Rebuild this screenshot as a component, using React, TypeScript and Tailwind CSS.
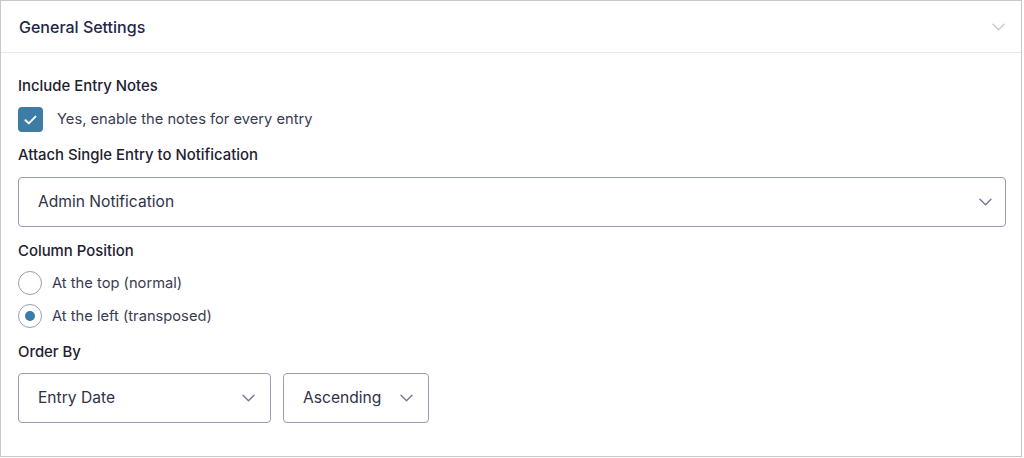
import React from "react";

const Chevron = ({ className = "" }: { className?: string }) => (
  <svg width="13" height="8" viewBox="0 0 13 8" fill="none" className={className}>
    <path d="M1 1.2l5.5 5.5L12 1.2" stroke="currentColor" strokeWidth="1.4" strokeLinecap="round" strokeLinejoin="round" />
  </svg>
);

const Select = ({ label, className = "" }: { label: string; className?: string }) => (
  <div className={`flex items-center justify-between h-[50px] border border-[#9a9cbc] rounded-[4px] pl-[19px] bg-white ${className}`}>
    <span className="text-[15.6px] text-[#2f3247]">{label}</span>
    <Chevron className="text-[#74778f]" />
  </div>
);

export default function App() {
  return (
    <div className="bg-white" style={{ fontFamily: "Inter, 'Noto Sans', sans-serif" }}>
      <div className="w-[1022px] h-[457px] border border-[#c8c8cc] bg-white">
        <div className="h-[52px] border-b border-[#e8e8ec] flex items-center justify-between pl-[18px] pr-[16px]">
          <span className="text-[16px] font-medium text-[#242748]">General Settings</span>
          <Chevron className="text-[#c7c8d4]" />
        </div>
        <div className="pl-[17px] pr-[16px] pt-[23px]">
          <div className="text-[14.9px] font-medium text-[#1f2130] leading-[20px]">Include Entry Notes</div>
          <div className="flex items-center mt-[11px] h-[25px]">
            <div className="w-[25px] h-[25px] rounded-[4px] bg-[#3d7ca5] flex items-center justify-center">
              <svg width="13" height="10" viewBox="0 0 13 10" fill="none">
                <path d="M1.5 5.2l3.3 3.2L11.5 1.6" stroke="white" strokeWidth="2" strokeLinecap="round" strokeLinejoin="round" />
              </svg>
            </div>
            <span className="ml-[14px] text-[14.7px] text-[#3a3c52]">Yes, enable the notes for every entry</span>
          </div>
          <div className="text-[14.9px] font-medium text-[#1f2130] leading-[20px] mt-[13px]">Attach Single Entry to Notification</div>
          <Select label="Admin Notification" className="mt-[12px] w-[988px] pr-[13px]" />
          <div className="text-[14.9px] font-medium text-[#1f2130] leading-[20px] mt-[14px]">Column Position</div>
          <div className="flex items-center mt-[10px] h-[24px]">
            <div className="w-[24px] h-[24px] rounded-full border border-[#9a9cb0] bg-white" />
            <span className="ml-[10px] text-[14.7px] text-[#3a3c52]">At the top (normal)</span>
          </div>
          <div className="flex items-center mt-[9px] h-[24px]">
            <div className="w-[24px] h-[24px] rounded-full border border-[#9a9cb0] bg-white flex items-center justify-center">
              <div className="w-[10px] h-[10px] rounded-full bg-[#3d7ca5]" />
            </div>
            <span className="ml-[10px] text-[14.7px] text-[#3a3c52]">At the left (transposed)</span>
          </div>
          <div className="text-[14.9px] font-medium text-[#1f2130] leading-[20px] mt-[14px]">Order By</div>
          <div className="flex gap-[12px] mt-[11px]">
            <Select label="Entry Date" className="w-[253px] pr-[15px]" />
            <Select label="Ascending" className="w-[146px] pr-[15px]" />
          </div>
        </div>
      </div>
    </div>
  );
}
